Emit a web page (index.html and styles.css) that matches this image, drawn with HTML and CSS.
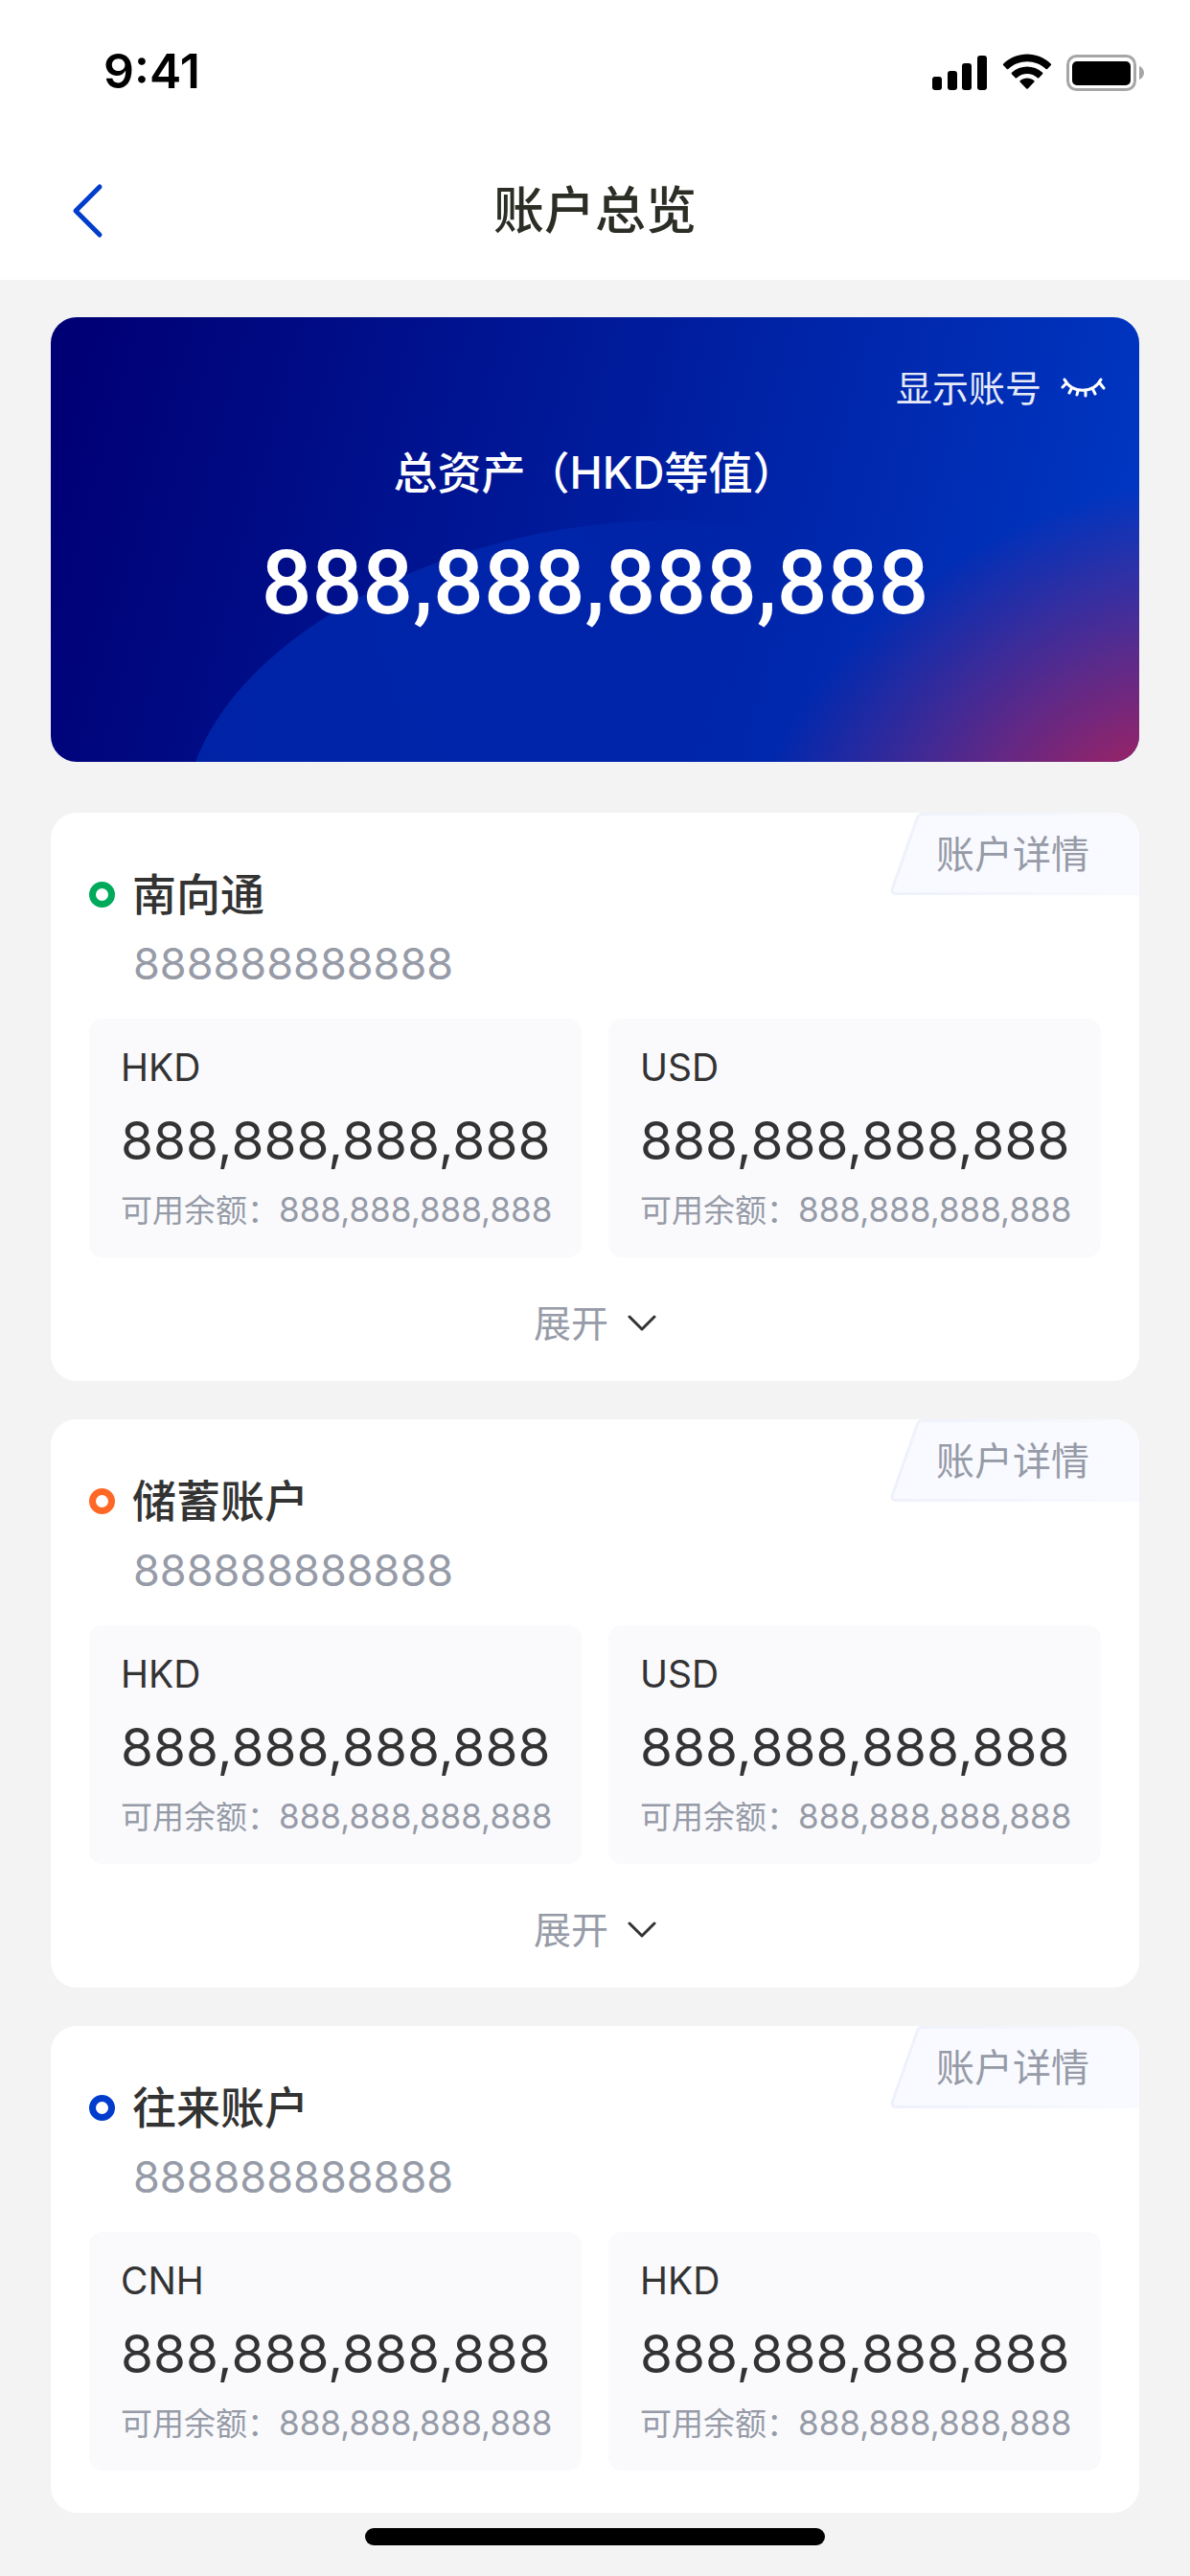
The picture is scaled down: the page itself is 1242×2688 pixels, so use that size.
FILE: index.html
```
<!DOCTYPE html>
<html lang="zh-CN">
<head>
	<meta charset="utf-8">
	<meta name="viewport" content="width=device-width">
	<title>账户总览</title>
	<link rel="stylesheet" href="styles.css">
</head>

<body>

<header class="top">
	<div class="status">
		<span class="time">9:41</span>
		<div class="status-icons">
			<svg width="58" height="44" viewBox="0 0 58 44">
				<rect x="0" y="28" width="10" height="14" rx="3"/>
				<rect x="16" y="22" width="10" height="20" rx="3"/>
				<rect x="31" y="14" width="10" height="28" rx="3"/>
				<rect x="47" y="6" width="10" height="36" rx="3"/>
			</svg>
			<svg width="52" height="44" viewBox="0.5 1 49 41.5">
				<path d="M25 12.6c6.900 0 13.500 2.600 18.500 7.300.4.400 1 .4 1.400 0l3.600-3.700c.4-.4.400-1 0-1.400-13.100-12.600-33.900-12.600-47 0-.4.400-.4 1 0 1.400l3.600 3.700c.4.400 1 .4 1.400 0 5-4.700 11.600-7.300 18.500-7.300z"/>
				<path d="M25 24.600c3.800 0 7.400 1.400 10.200 4 .4.400 1 .4 1.400 0l3.600-3.700c.4-.4.400-1 0-1.400-8.600-8-21.800-8-30.400 0-.4.400-.4 1 0 1.400l3.600 3.700c.4.400 1 .4 1.400 0 2.800-2.600 6.400-4 10.200-4z"/>
				<path d="M32 32.700c.4-.4.400-1 0-1.400-4-3.400-10-3.400-14 0-.4.400-.4 1 0 1.400l6.300 6.400c.4.400 1 .4 1.400 0z"/>
			</svg>
			<svg width="82" height="44" viewBox="0 0 82 44">
				<rect x="1.500" y="6.500" width="70" height="35" rx="9" fill="none" stroke="#a6a6a6" stroke-width="3"/>
				<rect x="6" y="12" width="61" height="25" rx="5"/>
				<path d="M76 17v14c3-1 5-4 5-7s-2-6-5-7z" fill="#a6a6a6"/>
			</svg>
		</div>
	</div>
	<div class="nav">
		<button class="back" aria-label="返回">
			<svg width="34" height="60" viewBox="0 0 34 60"><path d="M30 5L5 30L30 55" fill="none" stroke="#003dcc" stroke-width="5" stroke-linecap="round" stroke-linejoin="round"/></svg>
		</button>
		<h1 class="title">账户总览</h1>
	</div>
</header>

<main class="main">
	<section class="total">
		<svg class="total-bg" viewBox="0 0 1136 464" preserveAspectRatio="none">
			<defs>
				<linearGradient id="curve" gradientUnits="userSpaceOnUse" x1="150" y1="464" x2="1136" y2="200">
					<stop offset="0" stop-color="#0023a6"/>
					<stop offset="0.4" stop-color="#0025aa"/>
					<stop offset="0.65" stop-color="#002ab0" stop-opacity="0"/>
				</linearGradient>
				<radialGradient id="glow" gradientUnits="userSpaceOnUse" cx="0" cy="0" r="1" gradientTransform="translate(1136 500) rotate(-25) scale(430 310)">
					<stop offset="0" stop-color="#a8205c"/>
					<stop offset="1" stop-color="#a8205c" stop-opacity="0"/>
				</radialGradient>
			</defs>
			<path d="M151 464C205 320 430 212 646 212C840 212 1020 300 1136 464z" fill="url(#curve)"/>
			<rect width="1136" height="464" fill="url(#glow)"/>
		</svg>
		<button class="show">显示账号
			<svg width="48" height="22" viewBox="0 0 48 22"><path d="M4 2C12 17 34 17 42 2M5 7L2 10M11 12L9 16M18 14L17 18M26 14V19M34 13L36 17M41 6L45 11" fill="none" stroke="#fff" stroke-width="3" stroke-linecap="round"/></svg>
		</button>
		<h2 class="total-name">总资产（HKD等值）</h2>
		<p class="total-num">888,888,888,888</p>
	</section>

	<section class="card">
		<a class="detail" href="#">
			<svg class="detail-bg" width="260" height="86" viewBox="0 0 260 86">
				<defs>
					<linearGradient id="edge" gradientUnits="userSpaceOnUse" x1="0" y1="0" x2="260" y2="0">
						<stop offset="0" stop-color="#eef1fb"/>
						<stop offset="1" stop-color="#f9faff"/>
					</linearGradient>
				</defs>
				<path d="M262 1.500H34Q30 1.500 28.500 5L2.500 79Q1 84.500 6 84.500H262" fill="#f9faff" stroke="url(#edge)" stroke-width="3"/>
			</svg>
			<span>账户详情</span>
		</a>
		<h2 class="name green">南向通</h2>
		<p class="no">888888888888</p>
		<div class="list">
			<div class="item">
				<p class="cur">HKD</p>
				<p class="num">888,888,888,888</p>
				<p class="rest">可用余额：<span>888,888,888,888</span></p>
			</div>
			<div class="item">
				<p class="cur">USD</p>
				<p class="num">888,888,888,888</p>
				<p class="rest">可用余额：<span>888,888,888,888</span></p>
			</div>
		</div>
		<button class="more">展开
			<svg width="30" height="18" viewBox="0 0 30 18"><path d="M2 2L15 15L28 2" fill="none" stroke="#333" stroke-width="3" stroke-linecap="round" stroke-linejoin="round"/></svg>
		</button>
	</section>

	<section class="card">
		<a class="detail" href="#">
			<svg class="detail-bg" width="260" height="86" viewBox="0 0 260 86"><path d="M262 1.500H34Q30 1.500 28.500 5L2.500 79Q1 84.500 6 84.500H262" fill="#f9faff" stroke="url(#edge)" stroke-width="3"/></svg>
			<span>账户详情</span>
		</a>
		<h2 class="name orange">储蓄账户</h2>
		<p class="no">888888888888</p>
		<div class="list">
			<div class="item">
				<p class="cur">HKD</p>
				<p class="num">888,888,888,888</p>
				<p class="rest">可用余额：<span>888,888,888,888</span></p>
			</div>
			<div class="item">
				<p class="cur">USD</p>
				<p class="num">888,888,888,888</p>
				<p class="rest">可用余额：<span>888,888,888,888</span></p>
			</div>
		</div>
		<button class="more">展开
			<svg width="30" height="18" viewBox="0 0 30 18"><path d="M2 2L15 15L28 2" fill="none" stroke="#333" stroke-width="3" stroke-linecap="round" stroke-linejoin="round"/></svg>
		</button>
	</section>

	<section class="card">
		<a class="detail" href="#">
			<svg class="detail-bg" width="260" height="86" viewBox="0 0 260 86"><path d="M262 1.500H34Q30 1.500 28.500 5L2.500 79Q1 84.500 6 84.500H262" fill="#f9faff" stroke="url(#edge)" stroke-width="3"/></svg>
			<span>账户详情</span>
		</a>
		<h2 class="name blue">往来账户</h2>
		<p class="no">888888888888</p>
		<div class="list">
			<div class="item">
				<p class="cur">CNH</p>
				<p class="num">888,888,888,888</p>
				<p class="rest">可用余额：<span>888,888,888,888</span></p>
			</div>
			<div class="item">
				<p class="cur">HKD</p>
				<p class="num">888,888,888,888</p>
				<p class="rest">可用余额：<span>888,888,888,888</span></p>
			</div>
		</div>
	</section>
</main>

<div class="home-bar"></div>

</body>
</html>
```
FILE: styles.css
```
*,*::before{
	box-sizing:border-box;
}
body{
	margin:0;
	background-color:#f3f3f3;
	color:#333;
	font-family:Inter,"Noto Sans CJK SC",sans-serif;
}
h1,h2,p{
	margin:0;
	font-weight:500;
}
svg{
	display:block;
}
button{
	border:0;
	padding:0;
	background:none;
	font-family:inherit;
	cursor:pointer;
}

/* header */
.top{
	background-color:#fff;
}
.status{
	display:flex;
	justify-content:space-between;
	align-items:center;
	height:148px;
	padding:0 47px 0 108px;
}
.time{
	color:#000;
	font-size:50px;
	font-weight:600;
}
.status-icons{
	display:flex;
	gap:15px;
}
.nav{
	display:grid;
	grid-template-columns:1fr auto 1fr;
	align-items:center;
	height:144px;
	padding:0 74px;
}
.back{
	justify-self:start;
}
.title{
	color:#2b2e24;
	font-size:53px;
	line-height:72px;
}

.main{
	padding:39px 53px 0;
}

/* total */
.total{
	position:relative;
	height:464px;
	overflow:hidden;
	border-radius:27px;
	background:linear-gradient(105deg,#000075 3%,#0038c4 97%);
	color:#fff;
	text-align:center;
}
.total-bg{
	position:absolute;
	left:0;
	top:0;
	width:100%;
	height:100%;
}
.show{
	position:relative;
	display:flex;
	align-items:center;
	gap:20px;
	margin-left:auto;
	padding:48px 34px 0 0;
	color:#e6eaf8;
	font-size:38px;
	line-height:52px;
}
.total-name{
	position:relative;
	margin-top:30px;
	font-size:46px;
	line-height:64px;
}
.total-num{
	position:relative;
	margin-top:30px;
	font-family:Roboto,sans-serif;
	font-size:93px;
	line-height:108px;
}

/* account */
.card{
	position:relative;
	margin-top:40px;
	padding:54px 40px 32px;
	overflow:hidden;
	border-radius:27px;
	background-color:#fff;
}
.total + .card{
	margin-top:53px;
}
.detail{
	position:absolute;
	right:0;
	top:0;
	width:260px;
	height:86px;
	padding-left:48px;
	color:#969ba7;
	font-size:40px;
	line-height:88px;
	text-decoration:none;
}
.detail span{
	position:relative;
}
.detail-bg{
	position:absolute;
	left:0;
	top:0;
}
.name{
	display:flex;
	align-items:center;
	gap:18px;
	font-size:46px;
	line-height:62px;
}
.name::before{
	content:"";
	width:27px;
	height:27px;
	border:7px solid #00aa5b;
	border-radius:50%;
}
.orange::before{
	border-color:#ff6726;
}
.blue::before{
	border-color:#003dcc;
}
.no{
	padding-left:46px;
	color:#969ba7;
	font-size:45px;
	font-weight:400;
	line-height:84px;
}
.list{
	display:grid;
	grid-template-columns:1fr 1fr;
	gap:28px;
	margin:15px 0 12px;
}
.item{
	padding:24px 0 26px 33px;
	border-radius:14px;
	background-color:#fafafd;
	white-space:nowrap;
}
.item p{
	font-weight:400;
}
.cur{
	font-size:39px;
	line-height:54px;
}
.num{
	font-size:55px;
	line-height:98px;
}
.item .rest{
	color:#969ba7;
	font-size:33px;
	line-height:46px;
}
.rest span{
	font-size:35px;
}
.more{
	display:flex;
	align-items:center;
	justify-content:center;
	gap:20px;
	width:100%;
	margin-top:41px;
	color:#969ba7;
	font-size:39px;
	line-height:56px;
}

.home-bar{
	width:480px;
	height:18px;
	margin:16px auto;
	border-radius:9px;
	background-color:#000;
}
```
